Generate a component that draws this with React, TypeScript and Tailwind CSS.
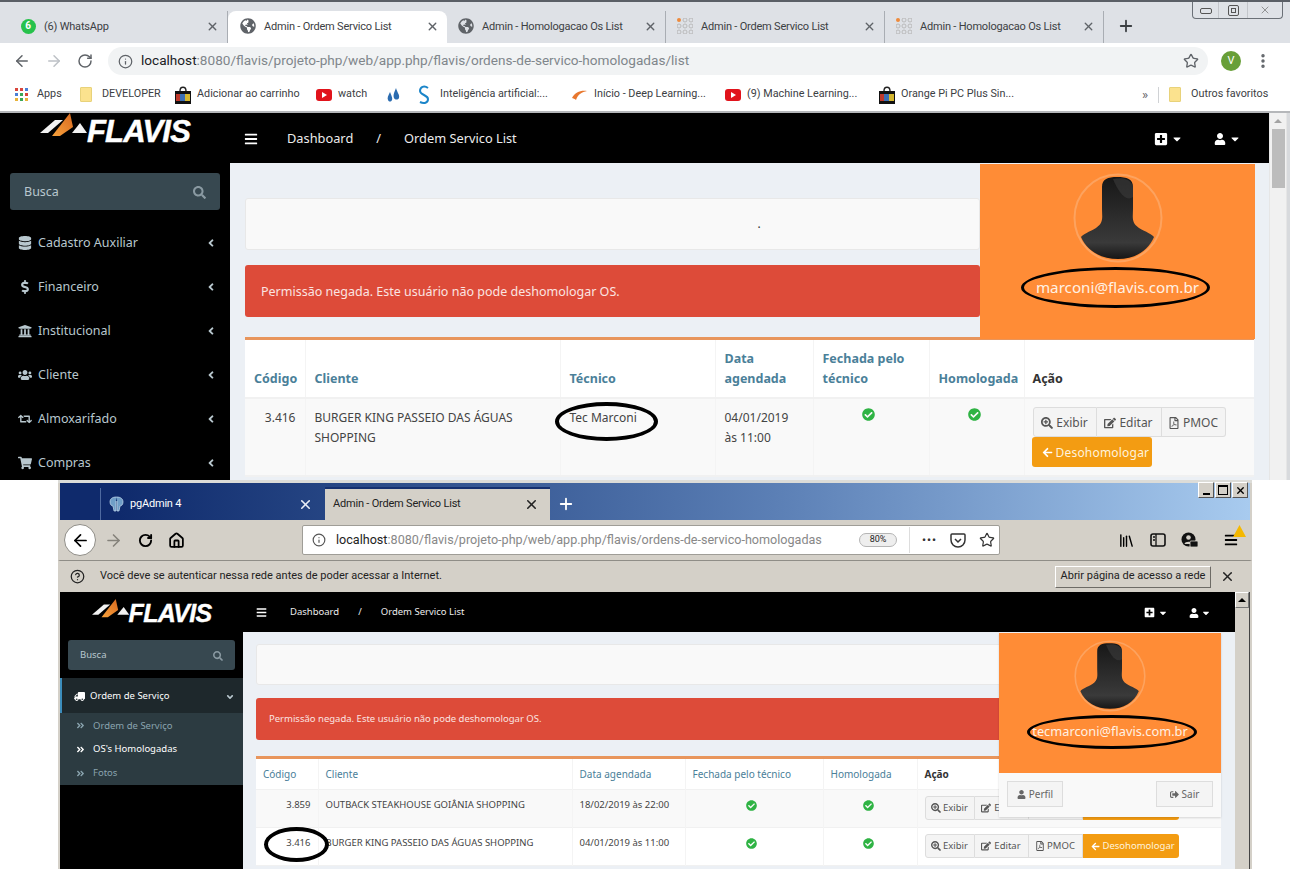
import React from "react";
import {
  FaAngleDoubleRight,
  FaAngleDown,
  FaAngleLeft,
  FaArrowLeft,
  FaBars,
  FaCaretDown,
  FaCheckCircle,
  FaDatabase,
  FaDollarSign,
  FaEdit,
  FaGlobeAmericas,
  FaPlusSquare,
  FaRegFilePdf,
  FaRetweet,
  FaSearch,
  FaSearchPlus,
  FaShoppingCart,
  FaSignOutAlt,
  FaTruck,
  FaUniversity,
  FaUser,
  FaUsers,
} from "react-icons/fa";
import {
  ArrowLeft,
  ArrowRight,
  CircleHelp,
  EllipsisVertical,
  House,
  Info,
  Library,
  Plus,
  RotateCw,
  Star,
  X,
} from "lucide-react";

const uiFont = "font-['Roboto',sans-serif]";
const appFont = "font-['Noto_Sans',sans-serif]";

const Logo = ({ small }: { small?: boolean }) => (
  <div className="flex items-start">
    <svg width={small ? 38 : 48} height={small ? 19 : 24} viewBox="0 0 48 24">
      <defs>
        <linearGradient id="peak" x1="0" y1="1" x2="1" y2="0">
          <stop offset="0" stopColor="#f7a23c" />
          <stop offset="1" stopColor="#d9691f" />
        </linearGradient>
      </defs>
      <path d="M0 20 L15 7 L23 7 L8 20 Z" fill="#f2f2f2" />
      <path d="M12 23 L30 0 L33 14 L20 23 Z" fill="url(#peak)" />
      <path d="M32 20 L40 10 L47 20 Z" fill="#f2f2f2" />
    </svg>
    <span
      className={
        small
          ? "mt-[2px] -ml-[1px] font-['Liberation_Sans',sans-serif] text-[25px] leading-none font-bold tracking-[-0.7px] text-white italic [-webkit-text-stroke:0.4px_white]"
          : "mt-[3px] -ml-[1px] font-['Liberation_Sans',sans-serif] text-[31px] leading-none font-bold tracking-[-0.8px] text-white italic [-webkit-text-stroke:0.5px_white]"
      }
    >
      FLAVIS
    </span>
  </div>
);

const Silhouette = ({ size }: { size: number }) => (
  <svg width={size} height={size} viewBox="0 0 90 90">
    <defs>
      <linearGradient id="bust" x1="0" y1="0" x2="0" y2="1">
        <stop offset="0" stopColor="#171717" />
        <stop offset="0.8" stopColor="#3a3a3a" />
        <stop offset="1" stopColor="#161616" />
      </linearGradient>
    </defs>
    <circle cx="45" cy="45" r="43.5" fill="none" stroke="#fda35f" strokeWidth="2" />
    <path
      d="M29 14 C29 6 35 4 44 4 C54 4 60 6 60 14 L60 36 C60 44 58 50 66 55 C73 59 79 61 81 64 C75 78 62 86 45 86 C28 86 14 78 8 64 C10 61 16 59 23 55 C31 50 29 44 29 36 Z"
      fill="url(#bust)"
    />
    <path d="M40 6 C50 4 58 6 60 14 L60 24 C52 30 44 16 40 6 Z" fill="#3c3c3c" opacity="0.6" />
  </svg>
);

const Ring = ({ className }: { className: string }) => (
  <div className={`pointer-events-none absolute rounded-[50%] border-black ${className}`} />
);

const Check = ({ small }: { small?: boolean }) => (
  <FaCheckCircle className={small ? "mx-auto text-[11px] text-[#2fb344]" : "mx-auto text-[13px] text-[#2fb344]"} />
);

const bookmarks: { label?: string; w: string; icon: React.ReactNode }[] = [
  {
    label: "Apps",
    w: "w-[65px]",
    icon: (
      <svg width="13" height="13" viewBox="0 0 13 13">
        {[0, 5, 10].map((y, r) =>
          [0, 5, 10].map((x, c) => (
            <rect
              key={`${r}${c}`}
              x={x}
              y={y}
              width="3"
              height="3"
              fill={["#d9453c", "#d9453c", "#4a7fd6", "#4a7fd6", "#3aa757", "#d9453c", "#e8b33a", "#3aa757", "#e8b33a"][r * 3 + c]}
            />
          ))
        )}
      </svg>
    ),
  },
  { label: "DEVELOPER", w: "w-[95px]", icon: <Folder /> },
  { label: "Adicionar ao carrinho", w: "w-[141px]", icon: <Bag /> },
  { label: "watch", w: "w-[71px]", icon: <Yt /> },
  {
    w: "w-[31px]",
    icon: (
      <svg width="13" height="16" viewBox="0 0 13 16">
        <path d="M3 5 C1 9 0 11 1 13 C2 15 4 15 5 13 C6 11 4 8 3 5 Z" fill="#2b6cb0" />
        <path d="M9 1 C7 6 6 8 7 11 C8 13 11 13 12 11 C13 8 10 5 9 1 Z" fill="#2b6cb0" />
      </svg>
    ),
  },
  {
    label: "Inteligência artificial:...",
    w: "w-[154px]",
    icon: (
      <svg width="12" height="20" viewBox="0 0 12 20">
        <path d="M10 3 C6 0 2 2 2 6 C2 10 10 10 10 14 C10 18 6 19 2 17" fill="none" stroke="#1b85c9" strokeWidth="2" />
      </svg>
    ),
  },
  {
    label: "Início - Deep Learning...",
    w: "w-[153px]",
    icon: (
      <svg width="15" height="12" viewBox="0 0 15 12">
        <path d="M0 9 C3 3 9 1 15 2 C10 3 6 5 4 11 C3 10 1 9 0 9 Z" fill="#e8772e" />
      </svg>
    ),
  },
  { label: "(9) Machine Learning...", w: "w-[154px]", icon: <Yt /> },
  { label: "Orange Pi PC Plus Sin...", w: "w-[263px]", icon: <Bag /> },
];

function Folder() {
  return <div className="h-[15px] w-[12px] rounded-[1px] border border-[#e8d27a] bg-[#fbe28e]" />;
}

function Bag() {
  return (
    <svg width="16" height="18" viewBox="0 0 16 18">
      <path d="M5 5 C5 0 11 0 11 5" fill="none" stroke="#222" strokeWidth="1.4" />
      <rect x="0" y="5" width="16" height="13" fill="#111" />
      <rect x="1" y="8" width="4" height="7" fill="#c0392b" />
      <rect x="5" y="8" width="5" height="7" fill="#3b6fb5" />
      <rect x="10" y="8" width="5" height="7" fill="#d4b62e" />
    </svg>
  );
}

function Yt() {
  return (
    <div className="flex h-[12px] w-[16px] items-center justify-center rounded-[3px] bg-[#e1131b]">
      <div className="h-0 w-0 border-y-[3px] border-l-[5px] border-y-transparent border-l-white" />
    </div>
  );
}

const ChromeDots = () => (
  <svg width="16" height="16" viewBox="0 0 16 16">
    {[2, 8, 14].map((y, r) =>
      [2, 8, 14].map((x, c) => (
        <circle
          key={`${r}${c}`}
          cx={x}
          cy={y}
          r="2"
          fill={r + c === 0 ? "#ee8a3c" : "none"}
          stroke={r + c === 0 ? "none" : "#b5b5b5"}
          strokeWidth="0.9"
        />
      ))
    )}
  </svg>
);

const chromeTabs: { title: string; w: string; active?: boolean; icon: React.ReactNode }[] = [
  {
    title: "(6) WhatsApp",
    w: "w-[228px] pl-[20px]",
    icon: (
      <div className="flex h-[15px] w-[15px] items-center justify-center rounded-full bg-[#27c24c] text-[10px] leading-none font-bold text-white">
        6
      </div>
    ),
  },
  { title: "Admin - Ordem Servico List", w: "w-[219px]", active: true, icon: <FaGlobeAmericas className="text-[16px] text-[#5f6368]" /> },
  { title: "Admin - Homologacao Os List", w: "w-[219px] pl-[11px]", icon: <FaGlobeAmericas className="text-[16px] text-[#5f6368]" /> },
  { title: "Admin - Ordem Servico List", w: "w-[219px] pl-[11px]", icon: <ChromeDots /> },
  { title: "Admin - Homologacao Os List", w: "w-[219px] pl-[11px]", icon: <ChromeDots /> },
];

const ChromeBar = () => (
  <div className={uiFont}>
    <div className="relative flex h-[43px] items-end border-t-2 border-[#5a5f66] bg-[#dee1e6]">
      <div className="flex">
        {chromeTabs.map((t, i) => (
          <div
            key={i}
            className={
              t.active
                ? "flex h-[32px] w-[219px] items-center gap-[8px] rounded-t-[8px] bg-white pr-[8px] pb-[2px] pl-[12px] text-[#3c4043]"
                : `flex h-[32px] ${t.w} items-center gap-[8px] border-r border-[#a9adb3] pr-[8px] pb-[2px] text-[#3c4043]`
            }
          >
            <span className="flex w-[16px] shrink-0 justify-center">{t.icon}</span>
            <span className="flex-1 text-[11px] leading-none tracking-[-0.2px] whitespace-nowrap">{t.title}</span>
            <X className="size-[13px] text-[#5f6368]" strokeWidth={2.5} />
          </div>
        ))}
      </div>
      <div className="flex h-[32px] items-center pb-[2px] pl-[13px]">
        <Plus className="size-[18px] text-[#3c4043]" strokeWidth={2.4} />
      </div>
      <div className="absolute top-0 right-[7px] flex h-[17px] w-[91px] items-center rounded-b-[4px] border border-t-0 border-[#6b7077] bg-[#dfe2e7]">
        <div className="flex flex-1 items-center justify-center">
          <div className="mt-[2px] h-[6px] w-[12px] rounded-[2px] border border-[#555]" />
        </div>
        <div className="flex h-full w-[30px] items-center justify-center border-x border-[#c3c6cb]">
          <div className="flex h-[11px] w-[11px] items-center justify-center rounded-[2px] border border-[#555]">
            <div className="h-[5px] w-[5px] border border-[#555]" />
          </div>
        </div>
        <div className="flex w-[34px] justify-center">
          <X className="size-[12px] text-[#777]" strokeWidth={1.5} />
        </div>
      </div>
    </div>
    <div className="flex h-[36px] items-center bg-white">
      <ArrowLeft className="ml-[13px] size-[18px] text-[#5f6368]" strokeWidth={2} />
      <ArrowRight className="ml-[14px] size-[18px] text-[#bdc1c6]" strokeWidth={2} />
      <RotateCw className="ml-[14px] size-[16px] text-[#5f6368]" strokeWidth={2.2} />
      <div className="ml-[15px] flex h-[28px] w-[1100px] items-center rounded-full bg-[#f1f3f4] pr-[9px] pl-[10px]">
        <Info className="size-[15px] text-[#5f6368]" />
        <span className="ml-[8px] flex-1 text-[13.6px] leading-none text-[#80868b]">
          <span className="text-[#202124]">localhost</span>:8080/flavis/projeto-php/web/app.php/flavis/ordens-de-servico-homologadas/list
        </span>
        <Star className="size-[16px] text-[#5f6368]" />
      </div>
      <div className="ml-[13px] flex h-[20px] w-[20px] items-center justify-center rounded-full bg-[#689f38] text-[11px] text-white">
        V
      </div>
      <EllipsisVertical className="ml-[13px] size-[18px] text-[#5f6368]" strokeWidth={2.6} />
    </div>
    <div className="flex h-[34px] items-center border-b-2 border-[#b5b7ba] bg-white pb-[1px] pl-[15px] text-[10.8px] text-[#3c4043]">
      {bookmarks.map((b, i) => (
        <div key={i} className={`flex ${b.w} items-center gap-[6px] whitespace-nowrap`}>
          <span className="flex w-[16px] shrink-0 justify-start">{b.icon}</span>
          {b.label && <span>{b.label}</span>}
        </div>
      ))}
      <span className="text-[13px] text-[#5f6368]">»</span>
      <div className="mx-[10px] h-[16px] w-px bg-[#d0d2d5]" />
      <Folder />
      <span className="ml-[10px]">Outros favoritos</span>
    </div>
  </div>
);

const menu = [
  { label: "Cadastro Auxiliar", icon: <FaDatabase /> },
  { label: "Financeiro", icon: <FaDollarSign /> },
  { label: "Institucional", icon: <FaUniversity /> },
  { label: "Cliente", icon: <FaUsers /> },
  { label: "Almoxarifado", icon: <FaRetweet /> },
  { label: "Compras", icon: <FaShoppingCart /> },
];

const TopPage = () => (
  <div className={`relative flex h-[367px] ${appFont}`}>
    <div className="relative flex w-[1269px] flex-col">
      <div className="flex h-[50px] shrink-0 bg-black text-white">
        <div className="flex w-[230px] justify-center">
          <div>
            <Logo />
          </div>
        </div>
        <div className="flex flex-1 items-center pt-[2px] text-[12.8px] text-[#ececec]">
          <FaBars className="ml-[14px] text-[14px] text-white" />
          <span className="ml-[29px]">Dashboard</span>
          <span className="ml-[23px]">/</span>
          <span className="ml-[23px]">Ordem Servico List</span>
          <div className="ml-auto flex items-center pr-[28px]">
            <FaPlusSquare className="text-[14px] text-white" />
            <FaCaretDown className="ml-[3px] text-[12px] text-white" />
            <FaUser className="ml-[31px] text-[12px] text-white" />
            <FaCaretDown className="ml-[3px] text-[12px] text-white" />
          </div>
        </div>
      </div>
      <div className="flex min-h-0 flex-1">
        <div className="w-[230px] shrink-0 overflow-hidden bg-black pt-[10px]">
          <div className="mx-[10px] flex h-[37px] items-center justify-between rounded-[3px] bg-[#374850] px-[14px] pt-[2px] text-[12.5px] text-[#b8c7ce]">
            <span>Busca</span>
            <FaSearch className="text-[13px] text-[#8a9aa2]" />
          </div>
          <div className="mt-[11px]">
            {menu.map((m) => (
              <div key={m.label} className="flex h-[44px] items-center pr-[13px] pl-[18px] text-[12.5px] text-[#b8c7ce]">
                <span className="flex w-[20px] text-[14px]">{m.icon}</span>
                <span className="flex-1">{m.label}</span>
                <FaAngleLeft className="text-[12px]" />
              </div>
            ))}
          </div>
        </div>
        <div className="flex-1 overflow-hidden bg-[#ecf0f5] px-[15px] pt-[35px]">
          <div className="flex h-[52px] w-[735px] items-center justify-center rounded-[3px] border border-[#e8e8e8] bg-[#f9f9f9] pl-[293px] text-[12px] text-[#333]">
            .
          </div>
          <div className="mt-[15px] flex h-[52px] w-[735px] items-center rounded-[3px] bg-[#dd4b39] pt-[2px] pl-[16px] text-[12.5px] text-[#fbe4e1]">
            Permissão negada. Este usuário não pode deshomologar OS.
          </div>
          <div className="mt-[20px] w-[1009px] border-t-[3px] border-[#e8955c] bg-white">
            <table className="w-full table-fixed border-collapse text-[12px] text-[#444]">
              <colgroup>
                <col className="w-[60px]" />
                <col className="w-[255px]" />
                <col className="w-[155px]" />
                <col className="w-[98px]" />
                <col className="w-[116px]" />
                <col className="w-[95px]" />
                <col />
              </colgroup>
              <thead>
                <tr className="h-[58px] border-b-2 border-[#f1f1f1] align-bottom text-[12.5px] leading-[20px] font-bold text-[#4a8099]">
                  <th className="border-r border-[#f4f4f4] px-[9px] pb-[8px] text-left">Código</th>
                  <th className="border-r border-[#f4f4f4] px-[9px] pb-[8px] text-left">Cliente</th>
                  <th className="border-r border-[#f4f4f4] px-[9px] pb-[8px] text-left">Técnico</th>
                  <th className="border-r border-[#f4f4f4] px-[9px] pb-[8px] text-left">Data agendada</th>
                  <th className="border-r border-[#f4f4f4] px-[9px] pb-[8px] text-left">Fechada pelo técnico</th>
                  <th className="border-r border-[#f4f4f4] px-[9px] pb-[8px] text-left">Homologada</th>
                  <th className="px-[8px] pb-[8px] text-left text-[#333]">Ação</th>
                </tr>
              </thead>
              <tbody>
                <tr className="h-[78px] border-b-2 border-[#f1f1f1] bg-[#f9f9f9] align-top leading-[20px]">
                  <td className="border-r border-[#f4f4f4] px-[9px] pt-[9px] text-right">3.416</td>
                  <td className="border-r border-[#f4f4f4] px-[9px] pt-[9px]">BURGER KING PASSEIO DAS ÁGUAS SHOPPING</td>
                  <td className="border-r border-[#f4f4f4] px-[9px] pt-[9px]">Tec Marconi</td>
                  <td className="border-r border-[#f4f4f4] px-[9px] pt-[9px]">04/01/2019 às 11:00</td>
                  <td className="border-r border-[#f4f4f4] pt-[9px] pr-[6px]">
                    <Check />
                  </td>
                  <td className="border-r border-[#f4f4f4] pt-[9px] pr-[4px]">
                    <Check />
                  </td>
                  <td className="pt-[8px] pl-[7px]">
                    <div className="ml-[1px] flex h-[30px] w-[193px] text-[#555]">
                      <div className="flex w-[64px] items-center justify-center gap-[3px] rounded-l-[3px] border border-[#ddd] bg-[#f4f4f4] pt-[1px]">
                        <FaSearchPlus className="text-[12px]" /> Exibir
                      </div>
                      <div className="flex w-[65px] items-center justify-center gap-[3px] border-y border-r border-[#ddd] bg-[#f4f4f4] pt-[1px]">
                        <FaEdit className="text-[12px]" /> Editar
                      </div>
                      <div className="flex w-[64px] items-center justify-center gap-[3px] rounded-r-[3px] border-y border-r border-[#ddd] bg-[#f4f4f4] pt-[1px]">
                        <FaRegFilePdf className="text-[12px]" /> PMOC
                      </div>
                    </div>
                    <div className="flex h-[30px] w-[120px] items-center gap-[3px] overflow-hidden rounded-[3px] bg-[#f39c12] pt-[1px] pl-[10px] tracking-[0.2px] whitespace-nowrap text-[#fff3dc]">
                      <FaArrowLeft className="shrink-0 text-[11px] text-white" /> Desohomologar
                    </div>
                  </td>
                </tr>
              </tbody>
            </table>
          </div>
        </div>
      </div>
      <div className="absolute top-[51px] left-[980px] flex h-[175px] w-[275px] flex-col items-center bg-[#ff8c36] pt-[9px]">
        <Silhouette size={90} />
        <span className="mt-[14px] text-[15.2px] leading-[20px] text-[#fff1e4]">marconi@flavis.com.br</span>
      </div>
      <Ring className="top-[154px] left-[1021px] h-[41px] w-[189px] border-[3.5px]" />
      <Ring className="top-[289px] left-[555px] h-[39px] w-[103px] border-[4px]" />
    </div>
    <div className="flex w-[18px] flex-col items-center border-x border-[#e6e6e6] bg-[#f1f1f1]">
      <div className="mt-[6px] h-0 w-0 border-x-[4px] border-b-[4px] border-x-transparent border-b-[#a3a3a3]" />
      <div className="mt-[6px] h-[59px] w-[13px] bg-[#bcbcbc]" />
    </div>
    <div className="w-[3px] bg-[#d8dadd]" />
  </div>
);

const FirefoxBar = () => (
  <div className={uiFont}>
    <div className="h-[3px] bg-[#dcdcd8]" />
    <div className="relative flex h-[37px] items-end border-x-2 border-[#d4d0c8] bg-gradient-to-r from-[#0f2a6c] from-5% via-[#5b7fb5] via-60% to-[#a8cbef]">
      <div className="ml-[40px] flex h-[32px] w-[225px] items-center border-l border-[#4f6aa0] pr-[12px] pl-[8px] text-[11px] tracking-[-0.2px] text-white">
        <svg width="15" height="16" viewBox="0 0 15 16" className="mr-[6px]">
          <path d="M7.5 1 C3 1 1 3 1 6 C1 9 3 10 4 10 L5 15 L7 15 L7 5 M8 5 L8 15 L10 15 L11 10 C12 10 14 9 14 6 C14 3 12 1 7.5 1" fill="#6f9ec7" stroke="#c8dcee" strokeWidth="0.7" />
        </svg>
        <span className="flex-1">pgAdmin 4</span>
        <X className="size-[15px] text-[#e8edf6]" strokeWidth={2.5} />
      </div>
      <div className="flex h-[33px] w-[225px] items-center border-t-2 border-[#15306f] bg-[#d4d0c8] pr-[11px] pl-[8px] text-[11px] tracking-[-0.2px] text-[#222]">
        <span className="flex-1">Admin - Ordem Servico List</span>
        <X className="size-[15px] text-[#222]" strokeWidth={2.5} />
      </div>
      <div className="flex h-[32px] items-center pl-[7px]">
        <Plus className="size-[18px] text-white" strokeWidth={2.4} />
      </div>
      <div className="absolute top-[-1px] right-[2px] flex h-[16px] gap-[1px] text-black">
        <div className="flex w-[16px] items-end justify-center border border-t-white border-r-[#555] border-b-[#555] border-l-white bg-[#d4d0c8] pb-[2px]">
          <div className="h-[2px] w-[7px] bg-black" />
        </div>
        <div className="flex w-[16px] items-center justify-center border border-t-white border-r-[#555] border-b-[#555] border-l-white bg-[#d4d0c8]">
          <div className="h-[10px] w-[10px] border border-t-2 border-black" />
        </div>
        <div className="flex w-[16px] items-center justify-center border border-t-white border-r-[#555] border-b-[#555] border-l-white bg-[#d4d0c8]">
          <X className="size-[11px]" strokeWidth={3} />
        </div>
      </div>
    </div>
    <div className="flex h-[41px] items-center border-x-2 border-b border-[#d4d0c8] border-b-[#8f8d87] bg-[#d4d0c8]">
      <div className="ml-[4px] flex h-[32px] w-[32px] items-center justify-center rounded-full border border-[#8f8d87] bg-white">
        <ArrowLeft className="size-[19px] text-black" strokeWidth={2.2} />
      </div>
      <ArrowRight className="ml-[8px] size-[19px] text-[#85827b]" strokeWidth={2} />
      <RotateCw className="ml-[15px] size-[15px] text-black" strokeWidth={3} />
      <House className="ml-[15px] size-[17px] text-black" strokeWidth={2.5} />
      <div className="ml-[117px] flex h-[30px] w-[698px] items-center rounded-[2px] border border-[#9f9d97] bg-white pr-[4px] pl-[9px]">
        <Info className="size-[14px] text-[#555]" />
        <span className="ml-[10px] flex-1 text-[12.6px] whitespace-nowrap text-[#888]">
          <span className="text-[#222]">localhost</span>:8080/flavis/projeto-php/web/app.php/flavis/ordens-de-servico-homologadas
        </span>
        <span className="flex h-[14px] w-[38px] items-center justify-center rounded-full border border-[#b5b5b5] bg-[#eeeeee] text-[9px] text-[#222]">
          80%
        </span>
        <div className="ml-[12px] h-[26px] w-px bg-[#ddd]" />
        <span className="ml-[12px] w-[16px] text-[11px] leading-none font-bold tracking-[1px] text-[#333]">•••</span>
        <svg width="16" height="15" viewBox="0 0 16 15" className="ml-[12px]">
          <path d="M2 1 H14 A1 1 0 0 1 15 2 V7 A7 7 0 0 1 1 7 V2 A1 1 0 0 1 2 1 Z M5 6 L8 9 L11 6" fill="none" stroke="#333" strokeWidth="1.5" />
        </svg>
        <Star className="ml-[13px] size-[16px] text-[#333]" strokeWidth={1.8} />
      </div>
      <Library className="ml-[118px] size-[17px] text-black" strokeWidth={2} />
      <svg width="16" height="14" viewBox="0 0 16 14" className="ml-[15px]">
        <rect x="1" y="1" width="14" height="12" rx="2" fill="none" stroke="#111" strokeWidth="1.6" />
        <path d="M6 1 V13 M3 4 H5 M3 7 H5" stroke="#111" strokeWidth="1.3" />
      </svg>
      <svg width="17" height="16" viewBox="0 0 17 16" className="ml-[15px]">
        <circle cx="7.5" cy="7.5" r="7" fill="#111" />
        <circle cx="7.5" cy="5.5" r="2.3" fill="#d4d0c8" />
        <path d="M3.5 12 C4 9 11 9 11.5 12 Z" fill="#d4d0c8" />
        <rect x="9" y="9" width="8" height="6" rx="1" fill="#111" stroke="#d4d0c8" strokeWidth="0.8" />
      </svg>
      <div className="relative ml-[26px]">
        <FaBars className="text-[14px] text-black" />
        <svg width="13" height="12" viewBox="0 0 13 12" className="absolute -top-[8px] -right-[8px]">
          <path d="M6.5 0 L13 12 H0 Z" fill="#f5b800" />
        </svg>
      </div>
    </div>
    <div className="flex h-[31px] items-center border-x-2 border-[#d4d0c8] bg-[#d4d0c8] text-[11px] text-[#222]">
      <CircleHelp className="ml-[10px] size-[15px] text-[#222]" />
      <span className="ml-[15px] flex-1">Você deve se autenticar nessa rede antes de poder acessar a Internet.</span>
      <div className="flex h-[22px] w-[156px] items-center justify-center border border-t-white border-r-[#6d6b66] border-b-[#6d6b66] border-l-white bg-[#d4d0c8]">
        Abrir página de acesso a rede
      </div>
      <X className="mr-[15px] ml-[9px] size-[15px] text-[#222]" strokeWidth={2.4} />
    </div>
  </div>
);

const BtnGroup = () => (
  <div className="flex h-[24px] text-[9.5px] text-[#555]">
    <div className="flex w-[50px] items-center justify-center gap-[2px] rounded-l-[3px] border border-[#ddd] bg-[#f4f4f4]">
      <FaSearchPlus className="text-[10px]" /> Exibir
    </div>
    <div className="flex w-[54px] items-center justify-center gap-[3px] border-y border-r border-[#ddd] bg-[#f4f4f4]">
      <FaEdit className="text-[10px]" /> Editar
    </div>
    <div className="flex w-[54px] items-center justify-center gap-[2px] border-y border-r border-[#ddd] bg-[#f4f4f4]">
      <FaRegFilePdf className="text-[10px]" /> PMOC
    </div>
    <div className="flex w-[96px] items-center gap-[3px] overflow-hidden rounded-r-[3px] bg-[#f39c12] pl-[8px] whitespace-nowrap text-[#fff3dc]">
      <FaArrowLeft className="shrink-0 text-[9px] text-white" /> Desohomologar
    </div>
  </div>
);

const rows = [
  { id: "3.859", client: "OUTBACK STEAKHOUSE GOIÂNIA SHOPPING", date: "18/02/2019 às 22:00", bg: "bg-[#f9f9f9]" },
  { id: "3.416", client: "BURGER KING PASSEIO DAS ÁGUAS SHOPPING", date: "04/01/2019 às 11:00", bg: "bg-white" },
];

const BottomPage = () => (
  <div className={`relative flex h-[277px] border-l-2 border-[#d4d0c8] ${appFont}`}>
    <div className="flex w-[1175px] flex-col">
      <div className="flex h-[40px] shrink-0 bg-black">
        <div className="flex w-[183px] justify-center">
          <div className="mt-[7px]">
            <Logo small />
          </div>
        </div>
        <div className="flex flex-1 items-center pt-[1px] text-[9.5px] text-[#ececec]">
          <FaBars className="ml-[13px] text-[11px] text-white" />
          <span className="ml-[23px]">Dashboard</span>
          <span className="ml-[19px]">/</span>
          <span className="ml-[19px]">Ordem Servico List</span>
          <div className="ml-auto flex items-center pr-[24px]">
            <FaPlusSquare className="text-[11px] text-white" />
            <FaCaretDown className="ml-[3px] text-[10px] text-white" />
            <FaUser className="ml-[21px] text-[10px] text-white" />
            <FaCaretDown className="ml-[2px] text-[10px] text-white" />
          </div>
        </div>
      </div>
      <div className="flex min-h-0 flex-1">
        <div className="w-[183px] shrink-0 bg-black pt-[8px] text-[9.5px] text-[#b8c7ce]">
          <div className="mx-[8px] flex h-[30px] items-center justify-between rounded-[3px] bg-[#374850] px-[12px] pt-[1px]">
            <span>Busca</span>
            <FaSearch className="text-[10px] text-[#8a9aa2]" />
          </div>
          <div className="mt-[8px] flex h-[35px] items-center border-l-2 border-[#3c8dbc] bg-[#1e282c] pt-[2px] pr-[8px] pl-[12px] text-white">
            <FaTruck className="mr-[5px] -scale-x-100 text-[11px]" />
            <span className="flex-1">Ordem de Serviço</span>
            <FaAngleDown className="text-[10px] text-[#b8c7ce]" />
          </div>
          <div className="flex h-[72px] flex-col justify-center bg-[#2c3b41] pt-[1px] pl-[16px] text-[#8aa4af]">
            <div className="flex h-[24px] items-center gap-[8px]">
              <FaAngleDoubleRight className="text-[9px]" />
              Ordem de Serviço
            </div>
            <div className="flex h-[24px] items-center gap-[8px] text-white">
              <FaAngleDoubleRight className="text-[9px]" />
              OS's Homologadas
            </div>
            <div className="flex h-[24px] items-center gap-[8px]">
              <FaAngleDoubleRight className="text-[9px]" />
              Fotos
            </div>
          </div>
        </div>
        <div className="flex-1 overflow-hidden bg-[#ecf0f5] pt-[12px] pr-[14px] pl-[13px]">
          <div className="h-[41px] rounded-[3px] border border-[#e8e8e8] bg-[#f9f9f9]" />
          <div className="mt-[13px] flex h-[42px] items-center rounded-[3px] bg-[#dd4b39] pl-[13px] text-[9.5px] text-[#fbe4e1]">
            Permissão negada. Este usuário não pode deshomologar OS.
          </div>
          <div className="mt-[16px] border-t-[3px] border-[#e8955c] bg-white">
            <table className="w-full table-fixed border-collapse text-[9.5px] text-[#444]">
              <colgroup>
                <col className="w-[62px]" />
                <col className="w-[254px]" />
                <col className="w-[113px]" />
                <col className="w-[138px]" />
                <col className="w-[94px]" />
                <col />
              </colgroup>
              <thead>
                <tr className="h-[30px] border-b border-[#f1f1f1] text-[10px] text-[#4a8099]">
                  <th className="border-r border-[#f4f4f4] px-[7px] pt-[1px] text-left font-normal">Código</th>
                  <th className="border-r border-[#f4f4f4] px-[7px] pt-[1px] text-left font-normal">Cliente</th>
                  <th className="border-r border-[#f4f4f4] px-[7px] pt-[1px] text-left font-normal">Data agendada</th>
                  <th className="border-r border-[#f4f4f4] px-[7px] pt-[1px] text-left font-normal">Fechada pelo técnico</th>
                  <th className="border-r border-[#f4f4f4] px-[7px] pt-[1px] text-left font-normal">Homologada</th>
                  <th className="px-[7px] pt-[1px] text-left font-bold text-[#333]">Ação</th>
                </tr>
              </thead>
              <tbody>
                {rows.map((r) => (
                  <tr key={r.id} className={`h-[38px] border-b border-[#f1f1f1] ${r.bg}`}>
                    <td className="border-r border-[#f4f4f4] px-[7px] pb-[6px] text-right">{r.id}</td>
                    <td className="border-r border-[#f4f4f4] px-[7px] pb-[6px] whitespace-nowrap">{r.client}</td>
                    <td className="border-r border-[#f4f4f4] px-[7px] pb-[6px]">{r.date}</td>
                    <td className="border-r border-[#f4f4f4] pr-[5px] pb-[6px]">
                      <Check small />
                    </td>
                    <td className="border-r border-[#f4f4f4] pr-[4px] pb-[6px]">
                      <Check small />
                    </td>
                    <td className="pl-[7px]">
                      <BtnGroup />
                    </td>
                  </tr>
                ))}
              </tbody>
            </table>
          </div>
        </div>
      </div>
    </div>
    <div className="absolute top-[41px] left-[939px] w-[222px] shadow-[0_1px_2px_rgba(0,0,0,0.15)]">
      <div className="flex h-[140px] flex-col items-center bg-[#ff8c36] pt-[7px]">
        <Silhouette size={72} />
        <span className="mt-[11px] text-[12.8px] leading-[16px] text-[#fff1e4]">tecmarconi@flavis.com.br</span>
      </div>
      <div className="flex h-[44px] items-start justify-between bg-[#f9f9f9] px-[8px] pt-[8px] text-[10px] text-[#666]">
        <div className="flex h-[26px] w-[56px] items-center justify-center gap-[3px] border border-[#ddd] bg-[#f4f4f4]">
          <FaUser className="text-[9px]" /> Perfil
        </div>
        <div className="flex h-[26px] w-[57px] items-center justify-center gap-[3px] border border-[#ddd] bg-[#f4f4f4]">
          <FaSignOutAlt className="text-[9px]" /> Sair
        </div>
      </div>
    </div>
    <Ring className="top-[123px] left-[967px] h-[34px] w-[170px] border-[3px]" />
    <Ring className="top-[235px] left-[204px] h-[35px] w-[65px] border-[4px]" />
    <div className="flex flex-1 flex-col items-center bg-[#d4d0c8]">
      <div className="flex h-[16px] w-full items-center justify-center border border-t-white border-r-[#777] border-b-[#777] border-l-white">
        <div className="h-0 w-0 border-x-[4px] border-b-[4px] border-x-transparent border-b-black" />
      </div>
    </div>
    <div className="w-[3px] border-l border-[#444] bg-[#d4d0c8]" />
  </div>
);

const App = () => {
  return (
    <div className="h-[869px] w-[1290px] overflow-hidden bg-white">
      <div className="h-[480px] overflow-hidden">
        <ChromeBar />
        <TopPage />
      </div>
      <div className="ml-[58px] w-[1194px]">
        <FirefoxBar />
        <BottomPage />
      </div>
    </div>
  );
};

export default App;
